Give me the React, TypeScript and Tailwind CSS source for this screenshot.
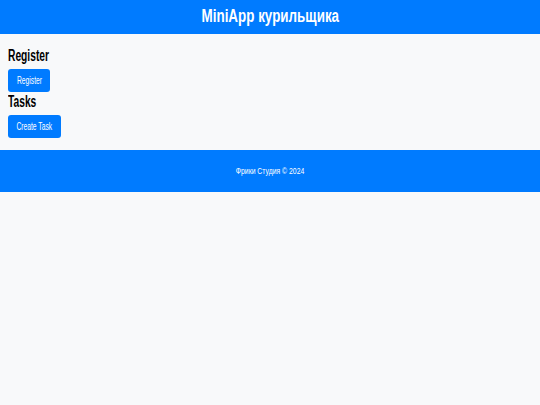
// Text in the screenshot is set in a condensed face; squeeze Liberation Sans to match.
export default function App() {
  return (
    <div className="min-h-screen bg-[#f8f9fa] font-['Liberation_Sans',Arial,sans-serif] text-black">
      {/* Header */}
      <header className="h-[34px] bg-[#007bff] flex items-center justify-center pb-[2px]">
        <h1 className="text-[18px] leading-none font-bold text-white">
          <span className="inline-block scale-x-[0.745] whitespace-nowrap">MiniApp курильщика</span>
        </h1>
      </header>

      {/* Content */}
      <main className="px-2 pt-[14px] pb-3">
        <section>
          <h2 className="text-[16px] leading-4 font-bold mb-[5px]">
            <span className="inline-block scale-x-[0.64] origin-left">Register</span>
          </h2>
          <button
            type="button"
            className="w-[42px] h-[23px] flex items-center justify-center rounded-[3px] bg-[#007bff] text-white text-[11px] leading-none"
          >
            <span className="inline-block scale-x-[0.61] whitespace-nowrap">Register</span>
          </button>
        </section>
        <section className="mt-[2px]">
          <h2 className="text-[16px] leading-4 font-bold mb-[5px]">
            <span className="inline-block scale-x-[0.64] origin-left">Tasks</span>
          </h2>
          <button
            type="button"
            className="w-[53px] h-[23px] flex items-center justify-center rounded-[3px] bg-[#007bff] text-white text-[11px] leading-none"
          >
            <span className="inline-block scale-x-[0.61] whitespace-nowrap">Create Task</span>
          </button>
        </section>
      </main>

      {/* Footer */}
      <footer className="h-[42px] bg-[#007bff] flex items-center justify-center">
        <p className="text-[9px] leading-none text-white">
          <span className="inline-block scale-x-[0.76] whitespace-nowrap">Фрики Студия © 2024</span>
        </p>
      </footer>
    </div>
  )
}
